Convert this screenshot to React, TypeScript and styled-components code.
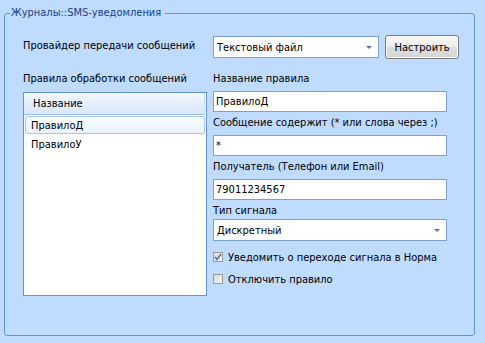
import React from "react";
import styled, { createGlobalStyle } from "styled-components";

const GlobalStyle = createGlobalStyle`
  html, body {
    margin: 0;
    padding: 0;
    background: #bfdbff;
  }
  body {
    font-family: "DejaVu Sans Condensed", "Liberation Sans", Arial, sans-serif;
    font-size: 11px;
    color: #000;
  }
`;

const Group = styled.fieldset`
  box-sizing: border-box;
  margin: 6px 0 0 4px;
  padding: 0;
  width: 471px;
  height: 330px;
  border: 1px solid #6593cf;
  border-radius: 3px;
  min-inline-size: auto;
`;

const Legend = styled.legend`
  margin-left: 5px;
  padding: 0 4px 0 1px;
  line-height: 14px;
  color: #15428b;
`;

const Body = styled.div`
  padding: 15px 0 0 18px;
  display: grid;
  grid-template-columns: 184px 246px;
  column-gap: 6px;
  row-gap: 13px;
`;

const Cell = styled.div`
  display: flex;
  flex-direction: column;
`;

const InlineLabel = styled.div`
  display: flex;
  align-items: center;
  height: 23px;
  padding-bottom: 2px;
  box-sizing: border-box;
  white-space: nowrap;
`;

const ProviderRow = styled.div`
  display: flex;
  align-items: flex-start;
  gap: 6px;
`;

const Label = styled.div<{ $gap?: number }>`
  height: 14px;
  line-height: 14px;
  margin-bottom: ${(p) => p.$gap ?? 5}px;
  white-space: nowrap;
`;

const TextBox = styled.div<{ $width?: number }>`
  box-sizing: border-box;
  width: ${(p) => p.$width ?? 234}px;
  height: 21px;
  margin-bottom: 4px;
  background: #fff;
  border: 1px solid #7ba1d4;
  padding: 0 2px;
  line-height: 19px;
  white-space: nowrap;
`;

const Combo = styled(TextBox)<{ $after?: number }>`
  display: flex;
  align-items: center;
  justify-content: space-between;
  height: 22px;
  margin-top: ${(p) => (p.$after ? 0 : 1)}px;
  margin-bottom: ${(p) => p.$after ?? 0}px;
  padding: 0 6px 0 3px;
`;

const Arrow = styled.span`
  width: 0;
  height: 0;
  border-left: 3px solid transparent;
  border-right: 3px solid transparent;
  border-top: 3px solid #5f7593;
`;

const Button = styled.div`
  box-sizing: border-box;
  width: 74px;
  height: 24px;
  border: 1px solid #7a7a7a;
  border-radius: 3px;
  background: linear-gradient(#f8f8f8, #ececec 50%, #dcdcdc 51%, #d6d6d6);
  box-shadow: inset 0 0 0 1px #fbfbfb;
  display: flex;
  align-items: center;
  justify-content: center;
`;

const List = styled.div`
  box-sizing: border-box;
  height: 204px;
  background: #fff;
  border: 1px solid #6593cf;
`;

const ListHeader = styled.div`
  box-sizing: border-box;
  height: 22px;
  margin: 0 1px 0 0;
  padding-left: 9px;
  display: flex;
  align-items: center;
  border-bottom: 1px solid #9ebfe9;
  border-right: 1px solid #c9dcf5;
  background: linear-gradient(#f5f9fe, #e5effc 50%, #d7e6fa);
`;

const Row = styled.div<{ $selected?: boolean }>`
  box-sizing: border-box;
  height: 18px;
  margin: 1px 1px 0 1px;
  padding-left: 5px;
  display: flex;
  align-items: center;
  border: 1px solid ${(p) => (p.$selected ? "#a8c6ec" : "transparent")};
  border-radius: 2px;
  background: ${(p) =>
    p.$selected ? "linear-gradient(#f7fbff, #e9f2fd)" : "transparent"};
`;

const CheckRow = styled.div`
  display: flex;
  align-items: center;
  gap: 5px;
  height: 22px;
`;

const Box = styled.span`
  box-sizing: border-box;
  width: 10px;
  height: 10px;
  border: 1px solid #9a9a9a;
  background: linear-gradient(135deg, #d8d8d8, #f6f6f6);
  display: flex;
  align-items: center;
  justify-content: center;
`;

const Check = ({ checked, label }: { checked?: boolean; label: string }) => (
  <CheckRow>
    <Box>
      {checked && (
        <svg width="8" height="8" viewBox="0 0 8 8">
          <path d="M1 4 L3 6.5 L7 1" fill="none" stroke="#4a6fa8" strokeWidth="1.5" />
        </svg>
      )}
    </Box>
    <span>{label}</span>
  </CheckRow>
);

export default function App() {
  return (
    <>
      <GlobalStyle />
      <Group>
        <Legend>Журналы::SMS-уведомления</Legend>
        <Body>
          <InlineLabel>Провайдер передачи сообщений</InlineLabel>
          <ProviderRow>
            <Combo $width={167}>
              <span>Текстовый файл</span>
              <Arrow />
            </Combo>
            <Button>Настроить</Button>
          </ProviderRow>

          <Cell>
            <Label $gap={6}>Правила обработки сообщений</Label>
            <List>
              <ListHeader>Название</ListHeader>
              <Row $selected>ПравилоД</Row>
              <Row>ПравилоУ</Row>
            </List>
          </Cell>
          <Cell>
            <Label>Название правила</Label>
            <TextBox>ПравилоД</TextBox>
            <Label>Сообщение содержит (* или слова через ;)</Label>
            <TextBox>*</TextBox>
            <Label>Получатель (Телефон или Email)</Label>
            <TextBox>79011234567</TextBox>
            <Label $gap={1}>Тип сигнала</Label>
            <Combo $width={234} $after={5}>
              <span>Дискретный</span>
              <Arrow />
            </Combo>
            <Check checked label="Уведомить о переходе сигнала в Норма" />
            <Check label="Отключить правило" />
          </Cell>
        </Body>
      </Group>
    </>
  );
}
